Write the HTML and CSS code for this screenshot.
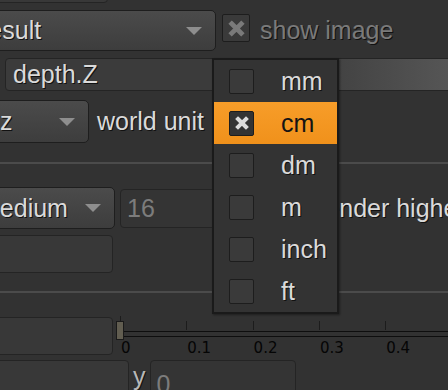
FILE: index.html
```html
<!DOCTYPE html>
<html lang="en">
<head>
    <meta charset="UTF-8">
    <meta name="viewport" content="width=device-width, initial-scale=1.0">
    <title>ZDefocus Properties</title>
    <link rel="stylesheet" href="styles.css">
</head>
<body>
    <div class="panel">
        <div class="row row-a">
            <div class="field field-top"></div>
        </div>

        <div class="row row-b">
            <div class="dropdown dd-output"><span>result</span><span class="arrow"></span></div>
            <span class="check check-show">
                <svg viewBox="0 0 16 16"><path d="M4 4L12 12M12 4L4 12"/></svg>
            </span>
            <span class="label dim show-label">show image</span>
        </div>

        <div class="row row-c">
            <div class="field field-channel">depth.Z</div>
        </div>

        <div class="row row-d">
            <div class="dropdown dd-math"><span>z</span><span class="arrow"></span></div>
            <span class="label world-label">world unit</span>
        </div>

        <div class="sep"></div>

        <div class="row row-e">
            <div class="dropdown dd-quality"><span>medium</span><span class="arrow"></span></div>
            <div class="field field-disabled field-size">16</div>
            <span class="label render-label">render higher</span>
        </div>

        <div class="row row-f">
            <div class="field field-left"></div>
        </div>

        <div class="sep sep-2"></div>

        <div class="row row-g">
            <div class="field field-left"></div>
            <div class="slider">
                <div class="track"></div>
                <div class="scale">
                    <div class="tick-col"><span class="tick major"></span><span class="tick-label">0</span></div>
                    <div class="tick-col"><span class="tick"></span><span class="tick-label">0.1</span></div>
                    <div class="tick-col"><span class="tick"></span><span class="tick-label">0.2</span></div>
                    <div class="tick-col"><span class="tick"></span><span class="tick-label">0.3</span></div>
                    <div class="tick-col"><span class="tick"></span><span class="tick-label">0.4</span></div>
                </div>
                <div class="handle"></div>
            </div>
        </div>

        <div class="row row-h">
            <div class="field field-wide"></div>
            <span class="label y-label">y</span>
            <div class="field field-disabled field-y">0</div>
        </div>
    </div>

    <!-- unit menu, open over the panel -->
    <div class="menu">
        <div class="menu-item"><span class="check"></span><span class="item-label">mm</span></div>
        <div class="menu-item selected">
            <span class="check checked">
                <svg viewBox="0 0 16 16"><path d="M4 4L12 12M12 4L4 12"/></svg>
            </span>
            <span class="item-label">cm</span>
        </div>
        <div class="menu-item"><span class="check"></span><span class="item-label">dm</span></div>
        <div class="menu-item"><span class="check"></span><span class="item-label">m</span></div>
        <div class="menu-item"><span class="check"></span><span class="item-label">inch</span></div>
        <div class="menu-item"><span class="check"></span><span class="item-label">ft</span></div>
    </div>
</body>
</html>
```

FILE: styles.css
```css
* {
    margin: 0;
    padding: 0;
    box-sizing: border-box;
}

body {
    width: 448px;
    height: 390px;
    overflow: hidden;
    position: relative;
    background-color: #323232;
    font-family: "Liberation Sans", Arial, sans-serif;
    font-size: 25px;
    color: #dadada;
}

.panel {
    display: flex;
    flex-direction: column;
}

.row {
    display: flex;
    align-items: center;
    flex: none;
}

.label {
    white-space: nowrap;
    text-shadow: 1px 1px 0 #111;
}

.dim {
    color: #7a7a7a;
}

/* dropdowns */
.dropdown {
    flex: none;
    display: flex;
    align-items: center;
    justify-content: space-between;
    padding-right: 13px;
    background: linear-gradient(#4b4b4b, #3d3d3d);
    border: 1.5px solid #1e1e1e;
    border-radius: 5px;
    white-space: nowrap;
    text-shadow: 1px 1px 0 #111;
}

.arrow {
    width: 0;
    height: 0;
    border-left: 8px solid transparent;
    border-right: 8px solid transparent;
    border-top: 8px solid #8e8e8e;
}

/* text fields */
.field {
    flex: none;
    display: flex;
    align-items: center;
    background-color: #383838;
    border: 1.5px solid #242424;
    border-radius: 4px;
    white-space: nowrap;
}

.field-disabled {
    background-color: #343434;
    color: #7c7c7c;
    padding-left: 6px;
}

/* checkboxes */
.check {
    flex: none;
    display: flex;
    align-items: center;
    justify-content: center;
    width: 25px;
    height: 25px;
    background-color: #3a3a3a;
    border: 1.5px solid #1d1d1d;
    border-radius: 2px;
}

.check svg {
    width: 16px;
    height: 16px;
    fill: none;
    stroke: #dcdcdc;
    stroke-width: 4;
    stroke-linecap: square;
}

.check.checked {
    background-color: #333;
}

.check-show {
    width: 28px;
    height: 28px;
    margin-left: 6px;
    align-self: flex-start;
    margin-top: 4px;
}

.check-show svg {
    width: 19px;
    height: 19px;
    stroke: #7a7a7a;
}

/* rows */
.row-a {
    height: 3px;
    align-items: flex-end;
}

.field-top {
    width: 138px;
    height: 30px;
    margin-left: -30px;
}

.row-b {
    margin-top: 7px;
    height: 41px;
}

.dd-output {
    width: 246px;
    height: 41px;
    margin-left: -30px;
    padding-left: 9px;
}

.show-label {
    margin-left: 10px;
}

.row-c {
    margin-top: 7px;
    height: 33px;
}

.field-channel {
    width: 460px;
    height: 33px;
    margin-left: 5px;
    padding-left: 7px;
    background: linear-gradient(to right, #3b3b3b 62%, #585858);
    text-shadow: 1px 1px 0 #111;
}

.row-d {
    margin-top: 9px;
    height: 43px;
}

.dd-math {
    width: 119px;
    height: 43px;
    margin-left: -30px;
    padding-left: 29px;
}

.world-label {
    margin-left: 8px;
}

.sep {
    flex: none;
    height: 2px;
    margin-top: 19px;
    background-color: #4b4b4b;
}

.sep-2 {
    margin-top: 18px;
}

.row-e {
    margin-top: 23px;
    height: 42px;
}

.dd-quality {
    width: 145px;
    height: 42px;
    margin-left: -30px;
    padding-left: 8px;
}

.field-size {
    width: 190px;
    height: 39px;
    margin-left: 5px;
}

.render-label {
    margin-left: 7px;
}

.row-f {
    margin-top: 6px;
    height: 38px;
}

.field-left {
    width: 143px;
    height: 38px;
    margin-left: -30px;
}

.row-g {
    margin-top: 24px;
    height: 38px;
}

/* slider */
.slider {
    position: relative;
    flex: 1;
    align-self: stretch;
    margin-left: 3px;
}

.track {
    position: absolute;
    left: 8px;
    right: 0;
    top: 13.5px;
    height: 6px;
    border-top: 1.5px solid #0e0e0e;
    border-bottom: 1.5px solid #0e0e0e;
}

.scale {
    display: flex;
    padding-left: 4px;
}

.tick-col {
    flex: none;
    width: 66.3px;
    display: flex;
    flex-direction: column;
    align-items: flex-start;
}

.tick {
    width: 1px;
    height: 9px;
    margin-top: 4px;
    background-color: #1c1c1c;
}

.tick.major {
    height: 14px;
    margin-top: -1px;
}

.tick-label {
    margin-top: 10px;
    margin-left: 1px;
    font-family: "DejaVu Sans", sans-serif;
    font-size: 15px;
    line-height: 17px;
    color: #050505;
}

.handle {
    position: absolute;
    left: 0;
    top: 4px;
    width: 8px;
    height: 19px;
    background-color: #615d50;
    border: 1.5px solid #1a1a1a;
}

.row-h {
    margin-top: 5px;
    height: 48px;
    align-items: flex-start;
}

.field-wide {
    width: 159px;
    height: 48px;
    margin-left: -30px;
}

.y-label {
    margin-left: 4px;
    line-height: 32px;
    color: #b8b8b8;
}

.field-y {
    width: 146px;
    height: 48px;
    margin-left: 4px;
}

/* popup menu */
.menu {
    position: absolute;
    left: 212px;
    top: 58px;
    width: 127px;
    height: 256px;
    background-color: #333;
    border: 2px solid #1a1a1a;
    box-shadow: 1px 1px 2px rgba(0, 0, 0, 0.4);
}

.menu-item {
    display: flex;
    align-items: center;
    height: 42px;
}

.menu-item .check {
    margin-left: 15px;
}

.item-label {
    margin-left: 27px;
    text-shadow: 1px 1px 0 #111;
}

.menu-item.selected {
    background: linear-gradient(#f79d29, #f0911b);
}

.menu-item.selected .item-label {
    color: #141414;
    text-shadow: none;
}
```
